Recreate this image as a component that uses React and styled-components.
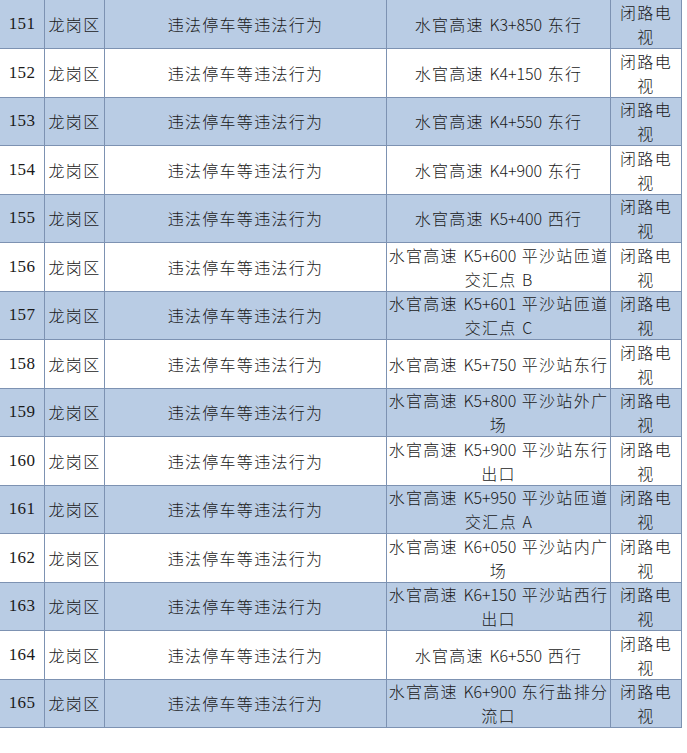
import React from "react";
import styled, { createGlobalStyle } from "styled-components";

const GlobalStyle = createGlobalStyle`
  html, body {
    margin: 0;
    padding: 0;
    background: #ffffff;
  }
  body {
    font-family: "Noto Sans CJK SC", "Noto Sans", sans-serif;
    color: #1a1a1a;
    overflow: hidden;
  }
`;

const Page = styled.div`
  width: 687px;
  height: 753px;
  overflow: hidden;
  background: #ffffff;
`;

// grid lines are the container background showing through 1px gaps
const Grid = styled.div`
  display: grid;
  grid-template-columns: 44px 59px 281px 223px 70px;
  grid-template-rows: 48px repeat(14, 47.5px);
  gap: 1px;
  padding: 0 1px 1px 1px;
  margin-left: -1px;
  width: max-content;
  background: #7d92b2;
  font-size: 16px;
  line-height: 24px;
  letter-spacing: 1.3px;
  font-weight: 300;
`;

const Cell = styled.div`
  display: flex;
  flex-direction: column;
  align-items: center;
  justify-content: center;
  text-align: center;
  white-space: nowrap;
  overflow: hidden;
  background: ${(p) => (p.$shaded ? "#b9cce4" : "#ffffff")};
`;

const NumCell = styled(Cell)`
  font-family: "Liberation Serif", serif;
  font-size: 17px;
  font-weight: 400;
  letter-spacing: 0.4px;
`;

const Line = styled.div`
  white-space: nowrap;
`;

const Latin = styled.span`
  letter-spacing: 0;
  word-spacing: 2px;
`;

const rows = [
  [151, ["水官高速 K3+850 东行"]],
  [152, ["水官高速 K4+150 东行"]],
  [153, ["水官高速 K4+550 东行"]],
  [154, ["水官高速 K4+900 东行"]],
  [155, ["水官高速 K5+400 西行"]],
  [156, ["水官高速 K5+600 平沙站匝道", "交汇点 B"]],
  [157, ["水官高速 K5+601 平沙站匝道", "交汇点 C"]],
  [158, ["水官高速 K5+750 平沙站东行"]],
  [159, ["水官高速 K5+800 平沙站外广", "场"]],
  [160, ["水官高速 K5+900 平沙站东行", "出口"]],
  [161, ["水官高速 K5+950 平沙站匝道", "交汇点 A"]],
  [162, ["水官高速 K6+050 平沙站内广", "场"]],
  [163, ["水官高速 K6+150 平沙站西行", "出口"]],
  [164, ["水官高速 K6+550 西行"]],
  [165, ["水官高速 K6+900 东行盐排分", "流口"]],
];

function Mixed({ text }) {
  return text
    .split(/([A-Za-z0-9+ ]+)/)
    .filter(Boolean)
    .map((part, i) =>
      /[A-Za-z0-9+ ]/.test(part) ? <Latin key={i}>{part}</Latin> : <span key={i}>{part}</span>
    );
}

export default function App() {
  return (
    <Page>
      <GlobalStyle />
      <Grid>
        {rows.map(([no, place], i) => {
          const shaded = i % 2 === 0;
          return (
            <React.Fragment key={no}>
              <NumCell $shaded={shaded}>{no}</NumCell>
              <Cell $shaded={shaded}>龙岗区</Cell>
              <Cell $shaded={shaded}>违法停车等违法行为</Cell>
              <Cell $shaded={shaded}>
                {place.map((t) => (
                  <Line key={t}>
                    <Mixed text={t} />
                  </Line>
                ))}
              </Cell>
              <Cell $shaded={shaded}>
                <Line>闭路电</Line>
                <Line>视</Line>
              </Cell>
            </React.Fragment>
          );
        })}
      </Grid>
    </Page>
  );
}
